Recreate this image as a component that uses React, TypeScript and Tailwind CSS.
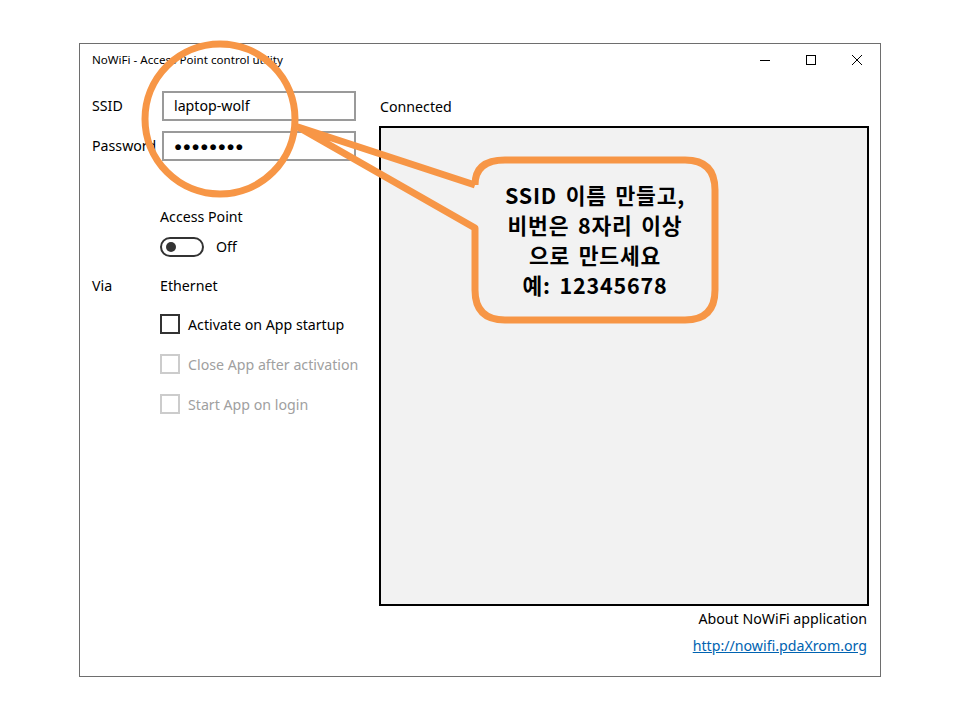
import React from "react";

const ui = { fontFamily: '"Segoe UI", "Noto Sans", "Liberation Sans", sans-serif' };
const ko = { fontFamily: '"Malgun Gothic", "Noto Sans CJK KR", sans-serif', wordSpacing: "3px" };

function TitleBar() {
  return (
    <div className="flex h-[32px] items-center justify-between">
      <span className="pl-[12px] text-[11.6px] text-black">
        NoWiFi - Access Point control utility
      </span>
      <div className="flex h-full">
        <button className="flex h-full w-[46px] items-center justify-center">
          <svg width="10" height="10" viewBox="0 0 10 10">
            <path d="M0 5.5h10" stroke="#000" strokeWidth="1" />
          </svg>
        </button>
        <button className="flex h-full w-[46px] items-center justify-center">
          <svg width="10" height="10" viewBox="0 0 10 10">
            <rect x="0.5" y="0.5" width="9" height="9" fill="none" stroke="#000" strokeWidth="1" />
          </svg>
        </button>
        <button className="flex h-full w-[46px] items-center justify-center">
          <svg width="10" height="10" viewBox="0 0 10 10">
            <path d="M0 0L10 10M10 0L0 10" stroke="#000" strokeWidth="1" />
          </svg>
        </button>
      </div>
    </div>
  );
}

function CheckRow({ label, disabled }: { label: string; disabled?: boolean }) {
  return (
    <div className="flex h-[20px] items-center gap-[8px]">
      <span
        className={
          disabled
            ? "h-[20px] w-[20px] border-2 border-[#cccccc]"
            : "h-[20px] w-[20px] border-2 border-[#333333]"
        }
      />
      <span className={disabled ? "text-[14.2px] text-[#a0a0a0]" : "text-[14.2px] text-black"}>
        {label}
      </span>
    </div>
  );
}

function Overlay() {
  const orange = "#f79646";
  return (
    <svg
      className="pointer-events-none absolute left-0 top-0"
      width="960"
      height="720"
      viewBox="0 0 960 720"
    >
      <circle cx="220" cy="119" r="75" fill="none" stroke={orange} strokeWidth="7" />
      <path
        d="M475 185 L298 127 L475 228 L475 290 Q475 320 505 320 L685 320 Q715 320 715 290 L715 190 Q715 160 685 160 L505 160 Q475 160 475 185"
        fill="none"
        stroke={orange}
        strokeWidth="7"
        strokeLinejoin="round"
      />
    </svg>
  );
}

export default function App() {
  return (
    <div className="relative h-[720px] w-[960px] overflow-hidden bg-white" style={ui}>
      <div className="ml-[79px] pt-[43px]">
        <div className="flex h-[634px] w-[802px] flex-col border border-[#6e6e6e] bg-white">
          <TitleBar />
          <div className="flex flex-1 text-[14.2px]">
            {/* left column */}
            <div className="w-[299px] pl-[12px]">
              <div className="mt-[15px] flex h-[30px] items-center">
                <span className="w-[70px]">SSID</span>
                <div className="flex h-[30px] w-[194px] items-center border-2 border-[#9a9a9a] pl-[10px]">
                  laptop-wolf
                </div>
              </div>
              <div className="mt-[10px] flex h-[30px] items-center">
                <span className="w-[70px] overflow-hidden whitespace-nowrap">Password</span>
                <div className="flex h-[30px] w-[194px] items-center border-2 border-[#9a9a9a] pl-[10px] text-[13.5px] tracking-[0.6px]">
                  ●●●●●●●●
                </div>
              </div>
              <div className="ml-[68px] mt-[46px] leading-[20px]">Access Point</div>
              <div className="ml-[68px] mt-[9px] flex items-center gap-[12px]">
                <span className="flex h-[20px] w-[44px] items-center rounded-full border-2 border-[#333333] pl-[4px]">
                  <span className="h-[10px] w-[10px] rounded-full bg-[#333333]" />
                </span>
                <span>Off</span>
              </div>
              <div className="mt-[19px] flex leading-[20px]">
                <span className="w-[68px]">Via</span>
                <span>Ethernet</span>
              </div>
              <div className="ml-[68px] mt-[18px] flex flex-col gap-[20px]">
                <CheckRow label="Activate on App startup" />
                <CheckRow label="Close App after activation" disabled />
                <CheckRow label="Start App on login" disabled />
              </div>
            </div>
            {/* right column */}
            <div className="flex w-[490px] flex-col">
              <div className="mt-[21px] h-[20px] pl-[1px] leading-[20px]">Connected</div>
              <div className="mt-[9px] h-[480px] border-2 border-black bg-[#f2f2f2]" />
              <div className="mt-[3px] pr-[2px] text-right leading-[20px]">
                About NoWiFi application
              </div>
              <div className="mt-[7px] pr-[2px] text-right leading-[20px]">
                <a href="#" className="text-[#0063b1] underline">
                  http://nowifi.pdaXrom.org
                </a>
              </div>
            </div>
          </div>
        </div>
      </div>
      <Overlay />
      <div
        className="absolute left-[475px] top-[160px] flex h-[160px] w-[240px] flex-col items-center justify-center text-center text-[21.5px] font-bold leading-[30px] tracking-[0.8px] text-black"
        style={ko}
      >
        <span>SSID 이름 만들고,</span>
        <span>비번은 8자리 이상</span>
        <span>으로 만드세요</span>
        <span>예: 12345678</span>
      </div>
    </div>
  );
}
